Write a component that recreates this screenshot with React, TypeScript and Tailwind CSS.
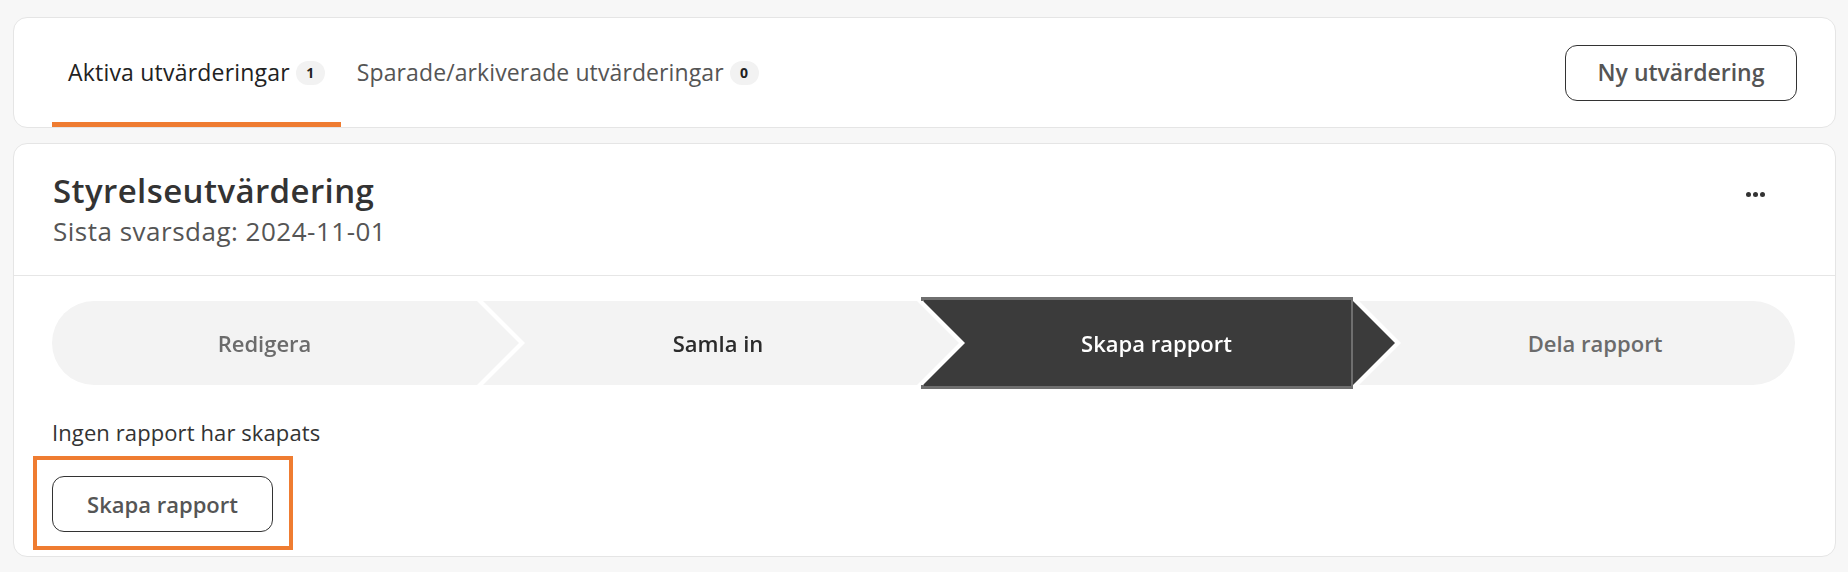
import React from "react";

function Badge({ n }: { n: string }) {
  return (
    <span className="ml-[6px] inline-flex h-[24px] w-[29px] items-center justify-center rounded-full bg-[#f2f2f2] text-[14px] font-bold text-[#222]">
      {n}
    </span>
  );
}

export default function App() {
  return (
    <div className="min-h-[572px] w-[1848px] bg-[#f7f7f7] pt-[17px] font-['Open_Sans','Noto_Sans',sans-serif]">
      {/* Top tabs card */}
      <div className="ml-[13px] mr-[12px] flex h-[111px] items-stretch justify-between rounded-[14px] border border-[#e5e5e5] bg-white pl-[38px] pr-[38px]">
        <div className="flex items-stretch">
          <div className="flex items-center border-b-[5px] border-[#ef7c31] px-[16px] pt-[5px] text-[23px] tracking-[0.2px] text-[#222]">
            <span>Aktiva utvärderingar</span>
            <Badge n="1" />
          </div>
          <div className="flex items-center border-b-[5px] border-transparent px-[16px] pt-[5px] text-[23px] tracking-[0.1px] text-[#555]">
            <span>Sparade/arkiverade utvärderingar</span>
            <Badge n="0" />
          </div>
        </div>
        <div className="flex items-center">
          <button className="h-[56px] w-[232px] rounded-[12px] border-[1.5px] border-[#333] bg-white text-[23px] font-semibold text-[#555]">
            Ny utvärdering
          </button>
        </div>
      </div>

      {/* Evaluation card */}
      <div className="ml-[13px] mr-[12px] mt-[15px] rounded-[14px] border border-[#e5e5e5] bg-white">
        <div className="flex justify-between border-b border-[#e6e6e6] pb-[27px] pl-[39px] pr-[70px] pt-[27px]">
          <div>
            <div className="text-[33px] font-semibold leading-[40px] tracking-[0.4px] text-[#333]">Styrelseutvärdering</div>
            <div className="mt-[3px] text-[26px] leading-[34px] tracking-[0.5px] text-[#555]">Sista svarsdag: 2024-11-01</div>
          </div>
          <div className="mt-[21px] flex h-[5px] gap-[2px]">
            <span className="h-[5px] w-[5px] rounded-full bg-[#333]" />
            <span className="h-[5px] w-[5px] rounded-full bg-[#333]" />
            <span className="h-[5px] w-[5px] rounded-full bg-[#333]" />
          </div>
        </div>

        <div className="pb-[6px] pl-[38px] pr-[40px] pt-[25px]">
          {/* Stepper */}
          <div className="flex h-[84px] items-stretch">
            <div className="relative z-40 -mr-[42px] h-[84px] w-[467px] [filter:drop-shadow(6px_0_0_#ffffff)]">
              <div className="flex h-full items-center justify-center rounded-l-[42px] bg-[#f3f3f3] pr-[42px] text-[22px] font-semibold text-[#6b6b6b] [clip-path:polygon(0_0,calc(100%_-_42px)_0,100%_50%,calc(100%_-_42px)_100%,0_100%)]">
                Redigera
              </div>
            </div>
            <div className="relative z-30 -mr-[42px] h-[84px] w-[482px] [filter:drop-shadow(6px_0_0_#ffffff)]">
              <div className="flex h-full items-center justify-center bg-[#f3f3f3] pl-[42px] pr-[42px] text-[22px] font-semibold text-[#2b2b2b] [clip-path:polygon(0_0,calc(100%_-_42px)_0,100%_50%,calc(100%_-_42px)_100%,0_100%)]">
                Samla in
              </div>
            </div>
            <div className="relative z-20 -mr-[42px] flex h-[84px] w-[478px] items-center [filter:drop-shadow(6px_0_0_#ffffff)]">
              <div className="ml-[4px] flex h-[92px] w-[432px] shrink-0 items-center justify-center border-[3px] border-r-[2px] border-[#6f6f6f] bg-[#3b3b3b] pl-[38px] text-[22px] font-semibold text-white">
                Skapa rapport
              </div>
              <div className="h-[84px] w-[42px] shrink-0 bg-[#3b3b3b] [clip-path:polygon(0_0,100%_50%,0_100%)]" />
            </div>
            <div className="relative z-10 flex h-[84px] w-[442px] items-center justify-center rounded-r-[42px] bg-[#f3f3f3] pl-[42px] text-[22px] font-semibold text-[#6b6b6b]">
              Dela rapport
            </div>
          </div>

          <div className="mt-[32px] text-[22px] leading-[30px] tracking-[0.1px] text-[#333]">Ingen rapport har skapats</div>

          <div className="-ml-[19px] mt-[9px] w-fit border-[4px] border-[#ef7c31] pb-[14px] pl-[15px] pr-[16px] pt-[16px]">
            <button className="h-[56px] w-[221px] rounded-[12px] border-[1.5px] border-[#333] bg-white text-[22px] font-semibold text-[#555]">
              Skapa rapport
            </button>
          </div>
        </div>
      </div>
    </div>
  );
}
